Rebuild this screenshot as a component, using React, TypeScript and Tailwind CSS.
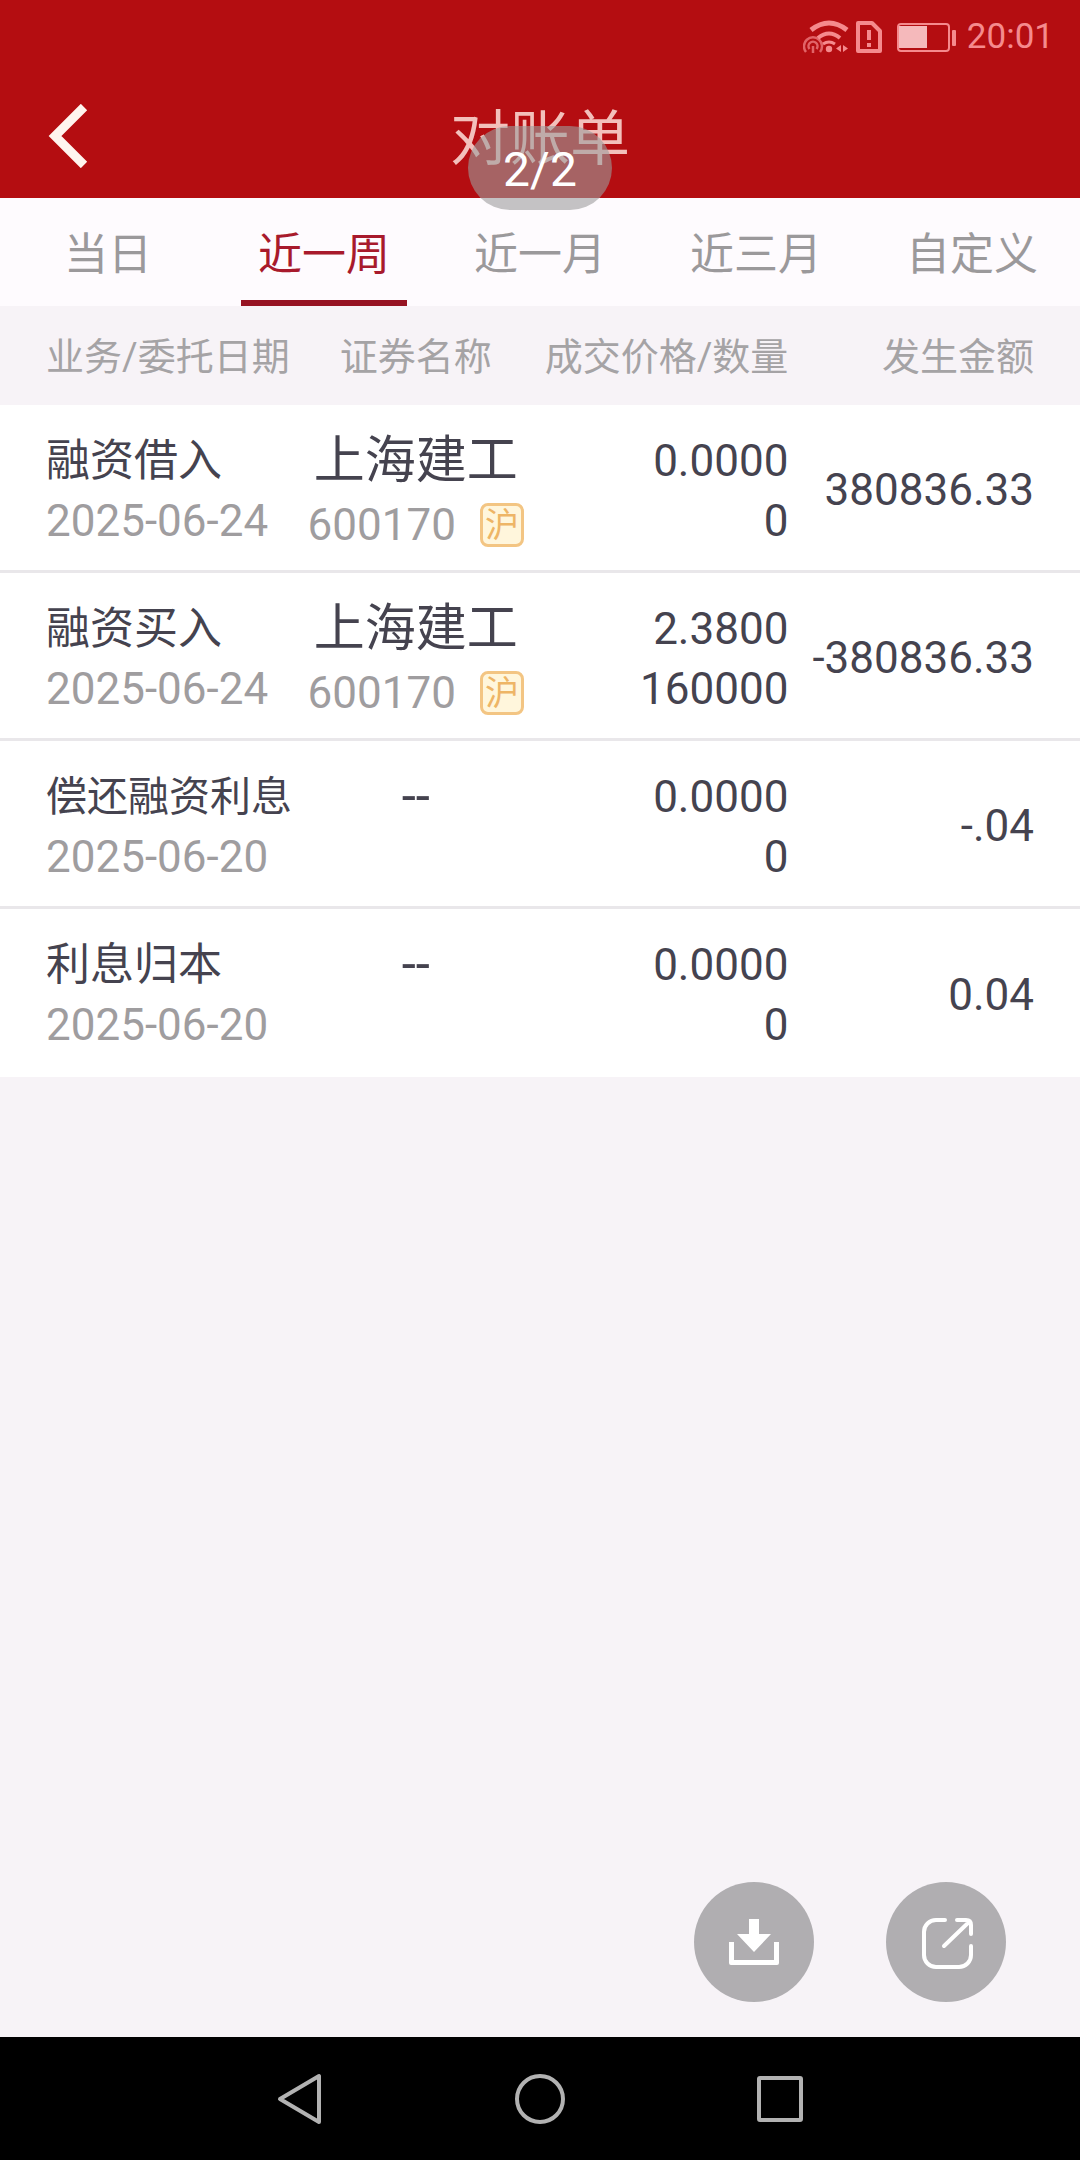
import { useState } from "react";

type Entry = {
  kind: string;
  date: string;
  name?: string;
  code?: string;
  price: string;
  quantity: string;
  amount: string;
};

const tabs = ["当日", "近一周", "近一月", "近三月", "自定义"];

const entries: Entry[] = [
  { kind: "融资借入", date: "2025-06-24", name: "上海建工", code: "600170", price: "0.0000", quantity: "0", amount: "380836.33" },
  { kind: "融资买入", date: "2025-06-24", name: "上海建工", code: "600170", price: "2.3800", quantity: "160000", amount: "-380836.33" },
  { kind: "偿还融资利息", date: "2025-06-20", price: "0.0000", quantity: "0", amount: "-.04" },
  { kind: "利息归本", date: "2025-06-20", price: "0.0000", quantity: "0", amount: "0.04" },
];

function WifiIcon() {
  return (
    <svg className="h-9 w-12" viewBox="0 0 48 36" fill="none" stroke="currentColor" aria-hidden="true">
      <path d="M8 11 Q26 -3 44 11" strokeWidth="5" />
      <path d="M15 19 Q26 10 37 19" strokeWidth="4" />
      <path d="M20 25 Q26 21 32 25" strokeWidth="3" />
      <circle cx="26" cy="30" r="3.2" fill="currentColor" stroke="none" />
      <path d="M38 26 v7 l-5 -3.5 z M40 26 v7 l5 -3.5 z" fill="currentColor" stroke="none" />
      <g opacity="0.7" strokeWidth="2.5">
        <path d="M3 33 A9 9 0 1 1 17 33" />
        <path d="M6.5 30 A4.5 4.5 0 1 1 13.5 30" />
        <path d="M10 27 V34" />
      </g>
    </svg>
  );
}

function SimIcon() {
  return (
    <svg className="h-9 w-7" viewBox="0 0 28 36" fill="none" stroke="currentColor" aria-hidden="true">
      <path d="M3 4 H17 L25 12 V32 H3 Z" strokeWidth="4" strokeLinejoin="round" />
      <path d="M14 11 V21 M14 24 V28" strokeWidth="4" />
    </svg>
  );
}

function BatteryIcon() {
  return (
    <svg className="h-9 w-16" viewBox="0 0 64 36" fill="none" aria-hidden="true">
      <rect x="3" y="5" width="51" height="27" rx="3" stroke="currentColor" strokeWidth="2" />
      <rect x="4" y="7" width="28" height="22" fill="#f5b9bb" />
      <rect x="57" y="11" width="4" height="16" rx="1" fill="currentColor" />
    </svg>
  );
}

function MarketBadge() {
  return (
    <span className="flex size-11 items-center justify-center rounded-lg border-3 border-[#f3c583] bg-[#fff6dc] text-[34px] leading-none text-[#eeb566]">
      沪
    </span>
  );
}

export default function App() {
  const [active, setActive] = useState("近一周");

  return (
    <div className="flex min-h-screen flex-col bg-[#f7f3f7] font-['Roboto','Noto_Sans_CJK_SC',sans-serif]">
      <header className="relative bg-[#b40d11]">
        <div className="flex h-[74px] items-center justify-end pr-[26px] text-[#f58a8d]">
          <WifiIcon />
          <span className="ml-1">
            <SimIcon />
          </span>
          <span className="ml-3">
            <BatteryIcon />
          </span>
          <time className="ml-2 text-[35px]">20:01</time>
        </div>
        <div className="grid h-[124px] grid-cols-[1fr_auto_1fr] items-center">
          <button type="button" aria-label="返回" className="ml-11 w-12 text-[#fff4ee]">
            <svg className="h-16 w-12" viewBox="0 0 48 64" fill="none" stroke="currentColor" strokeWidth="9" aria-hidden="true">
              <path d="M40 3 L11 32 L40 61" />
            </svg>
          </button>
          <h1 className="pt-2 text-[60px] leading-none text-[#f3c0bb]">对账单</h1>
        </div>
        <div className="absolute -bottom-3 left-1/2 z-10 flex h-[84px] w-36 -translate-x-1/2 items-center justify-center rounded-full bg-[#9d9d9d]/60 pt-1 text-5xl text-white">
          2/2
        </div>
      </header>

      <nav className="grid h-[108px] grid-cols-5 bg-[#fefbfe]">
        {tabs.map((tab) => (
          <button
            key={tab}
            type="button"
            aria-pressed={tab === active}
            onClick={() => setActive(tab)}
            className={
              tab === active
                ? "mx-auto w-[166px] border-b-6 border-[#961322] pt-3 text-[44px] text-[#a81a2c]"
                : "mx-auto w-[166px] border-b-6 border-transparent pt-3 text-[44px] text-[#9b999b]"
            }
          >
            {tab}
          </button>
        ))}
      </nav>

      <table className="w-full table-fixed border-separate border-spacing-0">
        <colgroup>
          <col className="w-[28%]" />
          <col className="w-[21%]" />
          <col className="w-[24%]" />
          <col className="w-[27%]" />
        </colgroup>
        <thead>
          <tr className="h-[99px] text-[38px] whitespace-nowrap text-[#a5a3a5] [&>th]:pt-1">
            <th scope="col" className="pl-[46px] text-left font-normal">业务/委托日期</th>
            <th scope="col" className="text-center font-normal">证券名称</th>
            <th scope="col" className="text-right font-normal">成交价格/数量</th>
            <th scope="col" className="pr-[46px] text-right font-normal">发生金额</th>
          </tr>
        </thead>
        <tbody className="bg-white text-[44px] leading-[60px] whitespace-nowrap text-[#45434f]">
          {entries.map((entry, index) => (
            <tr key={index} className="h-[168px] [&:not(:last-child)>td]:border-b-3 [&>td]:border-[#e9e7ea]">
              <td className="pt-[26px] pl-[46px] align-top">
                <div className={entry.kind.length > 5 ? "text-[41px]" : ""}>{entry.kind}</div>
                <div className="text-[#9f9d9f]">{entry.date}</div>
              </td>
              <td className="pt-[26px] text-center align-top">
                <div className="text-[51px]">{entry.name ?? "--"}</div>
                {entry.code && (
                  <div className="flex items-center justify-center gap-6 pt-1 text-[#9f9d9f]">
                    {entry.code}
                    <MarketBadge />
                  </div>
                )}
              </td>
              <td className="pt-[26px] text-right align-top">
                <div>{entry.price}</div>
                <div>{entry.quantity}</div>
              </td>
              <td className="pt-1 pr-[46px] text-right align-middle">{entry.amount}</td>
            </tr>
          ))}
        </tbody>
      </table>

      <div className="mt-auto flex justify-end gap-[72px] pr-[74px] pb-[35px]">
        <button type="button" aria-label="下载" className="size-[120px] rounded-full bg-[#b0aeb1] text-white">
          <svg viewBox="0 0 120 120" fill="currentColor" aria-hidden="true">
            <path d="M55 37 H65 V52 H77 L60 70 L43 52 H55 Z" />
            <path d="M35 60 H40 V78 H80 V60 H85 V81 Q85 83 83 83 H37 Q35 83 35 81 Z" />
          </svg>
        </button>
        <button type="button" aria-label="分享" className="size-[120px] rounded-full bg-[#b0aeb1] text-white">
          <svg viewBox="0 0 120 120" fill="none" stroke="currentColor" strokeWidth="4" strokeLinecap="round" strokeLinejoin="round" aria-hidden="true">
            <path d="M59 38 H50 A12 12 0 0 0 38 50 V73 A12 12 0 0 0 50 85 H73 A12 12 0 0 0 85 73 V64" />
            <path d="M71 38 H80 Q85 38 85 43 V52 M83 40 L58 64" />
          </svg>
        </button>
      </div>

      <footer className="flex h-[123px] items-center justify-center gap-[180px] bg-black text-[#b2b2b2]">
        <button type="button" aria-label="后退" className="size-15">
          <svg viewBox="0 0 60 60" fill="none" stroke="currentColor" strokeWidth="4" strokeLinejoin="round" aria-hidden="true">
            <path d="M49 7 V53 L10 30 Z" />
          </svg>
        </button>
        <button type="button" aria-label="主屏幕" className="size-15">
          <svg viewBox="0 0 60 60" fill="none" stroke="currentColor" strokeWidth="4" aria-hidden="true">
            <circle cx="30" cy="30" r="23" />
          </svg>
        </button>
        <button type="button" aria-label="最近任务" className="size-15">
          <svg viewBox="0 0 60 60" fill="none" stroke="currentColor" strokeWidth="4" strokeLinejoin="round" aria-hidden="true">
            <rect x="9" y="9" width="42" height="42" rx="1" />
          </svg>
        </button>
      </footer>
    </div>
  );
}
